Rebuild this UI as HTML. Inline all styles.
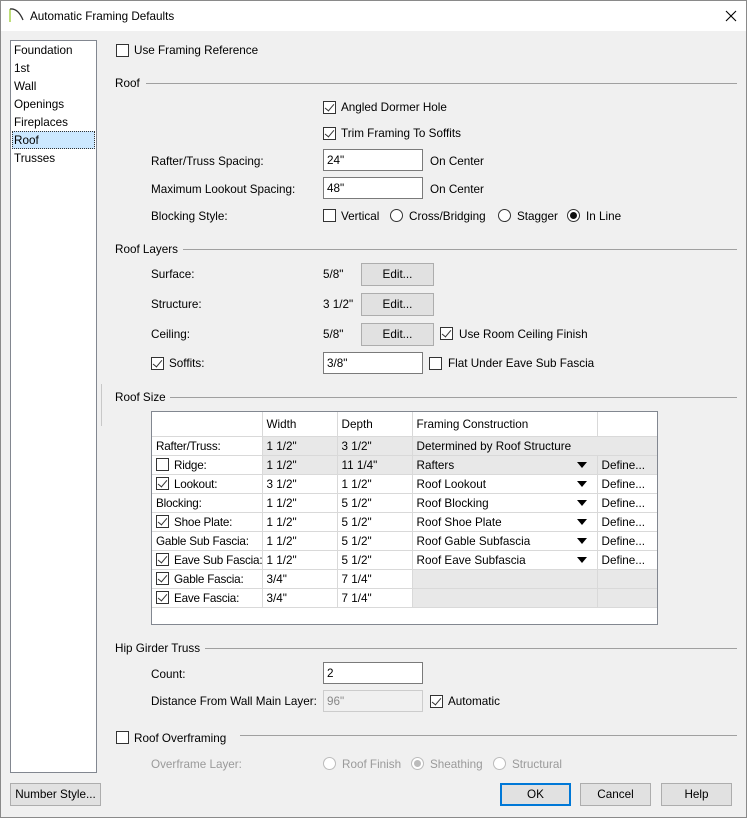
<!DOCTYPE html>
<html><head><style>
*{margin:0;padding:0;box-sizing:border-box}
body{width:747px;height:818px;overflow:hidden;background:#f0f0f0;font-family:"Liberation Sans",sans-serif;font-size:11.7px;color:#000;position:relative}
.a{position:absolute;white-space:nowrap;line-height:14px;margin-top:1px}
.cb{position:absolute;width:13px;height:13px;border:1px solid #333;background:#fff}
.cb.k::after{content:"";position:absolute;left:3px;top:0px;width:4px;height:8px;border:solid #333;border-width:0 1px 1px 0;transform:rotate(40deg)}
.rd{position:absolute;width:13px;height:13px;border:1px solid #333;border-radius:50%;background:#fff}
.rd.on::after{content:"";position:absolute;left:2px;top:2px;width:7px;height:7px;border-radius:50%;background:#111}
.rd.dis{border-color:#bcbcbc}
.rd.dis.on::after{background:#bcbcbc}
.in{position:absolute;width:100px;height:22px;border:1px solid #7a7a7a;background:#fff;padding:4px 0 0 3px;line-height:14px}
.btn{position:absolute;height:23px;border:1px solid #adadad;background:#e1e1e1;text-align:center;line-height:22px}
.ln{position:absolute;height:1px;background:#a0a0a0}
table{border-collapse:collapse;position:absolute;left:152px;top:412px;table-layout:fixed;width:505px}
td{height:19px;padding:1px 0 0 4px;border-right:1px solid #d9d9d9;border-bottom:1px solid #d9d9d9;line-height:17px;white-space:nowrap;overflow:hidden;position:relative}
td:first-child{overflow:visible;letter-spacing:-0.2px}
.g{background:#e8e8e8}
.arr{position:absolute;right:10px;top:6px;width:0;height:0;border-left:5px solid transparent;border-right:5px solid transparent;border-top:6px solid #000}
.tcb{display:inline-block;width:13px;height:13px;border:1px solid #333;background:#fff;vertical-align:-2px;margin-right:5px;position:relative}
.tcb.k::after{content:"";position:absolute;left:3px;top:0px;width:4px;height:8px;border:solid #333;border-width:0 1px 1px 0;transform:rotate(40deg)}
.dis{color:#9a9a9a}
</style></head><body>
<div style="position:absolute;left:0;top:0;width:747px;height:31px;background:#fff"></div>
<div style="position:absolute;left:0;top:0;width:747px;height:818px;border:1px solid #8a8a8a"></div>
<svg style="position:absolute;left:8px;top:6px" width="20" height="18"><path d="M2 16 V3" stroke="#9acd32" stroke-width="1.3" fill="none"/><path d="M2 3 Q10 2 15 14" stroke="#333" stroke-width="1.3" fill="none"/></svg>
<div class="a" style="left:30px;top:9px">Automatic Framing Defaults</div>
<svg style="position:absolute;left:725px;top:10px" width="12" height="12"><path d="M1 1L11 11M11 1L1 11" stroke="#000" stroke-width="1.1"/></svg>

<div style="position:absolute;left:10px;top:40px;width:87px;height:733px;background:#fff;border:1px solid #828790"></div>
<div style="position:absolute;left:12px;top:131px;width:83px;height:18px;background:#cce8ff;border:1px dotted #333"></div>
<div class="a" style="left:14px;top:43px">Foundation</div>
<div class="a" style="left:14px;top:61px">1st</div>
<div class="a" style="left:14px;top:79px">Wall</div>
<div class="a" style="left:14px;top:97px">Openings</div>
<div class="a" style="left:14px;top:115px">Fireplaces</div>
<div class="a" style="left:14px;top:133px">Roof</div>
<div class="a" style="left:14px;top:151px">Trusses</div>

<div class="cb" style="left:116px;top:44px"></div><div class="a" style="left:134px;top:43px">Use Framing Reference</div>
<div class="a" style="left:115px;top:76px">Roof</div><div class="ln" style="left:146px;top:83px;width:591px"></div>
<div class="cb k" style="left:323px;top:101px"></div><div class="a" style="left:341px;top:100px">Angled Dormer Hole</div>
<div class="cb k" style="left:323px;top:127px"></div><div class="a" style="left:341px;top:126px">Trim Framing To Soffits</div>
<div class="a" style="left:151px;top:154px">Rafter/Truss Spacing:</div><div class="in" style="left:323px;top:149px">24"</div><div class="a" style="left:430px;top:154px">On Center</div>
<div class="a" style="left:151px;top:182px">Maximum Lookout Spacing:</div><div class="in" style="left:323px;top:177px">48"</div><div class="a" style="left:430px;top:182px">On Center</div>
<div class="a" style="left:151px;top:209px">Blocking Style:</div>
<div class="cb" style="left:323px;top:209px"></div><div class="a" style="left:341px;top:209px">Vertical</div>
<div class="rd" style="left:390px;top:209px"></div><div class="a" style="left:409px;top:209px">Cross/Bridging</div>
<div class="rd" style="left:498px;top:209px"></div><div class="a" style="left:517px;top:209px">Stagger</div>
<div class="rd on" style="left:567px;top:209px"></div><div class="a" style="left:586px;top:209px">In Line</div>

<div class="a" style="left:115px;top:242px">Roof Layers</div><div class="ln" style="left:183px;top:249px;width:554px"></div>
<div class="a" style="left:151px;top:267px">Surface:</div><div class="a" style="left:323px;top:267px">5/8"</div><div class="btn" style="left:361px;top:263px;width:73px">Edit...</div>
<div class="a" style="left:151px;top:297px">Structure:</div><div class="a" style="left:323px;top:297px">3 1/2"</div><div class="btn" style="left:361px;top:293px;width:73px">Edit...</div>
<div class="a" style="left:151px;top:327px">Ceiling:</div><div class="a" style="left:323px;top:327px">5/8"</div><div class="btn" style="left:361px;top:323px;width:73px">Edit...</div>
<div class="cb k" style="left:440px;top:327px"></div><div class="a" style="left:459px;top:327px">Use Room Ceiling Finish</div>
<div class="cb k" style="left:151px;top:357px"></div><div class="a" style="left:169px;top:356px">Soffits:</div>
<div class="in" style="left:323px;top:352px">3/8"</div>
<div class="cb" style="left:429px;top:357px"></div><div class="a" style="left:448px;top:356px">Flat Under Eave Sub Fascia</div>
<div style="position:absolute;left:101px;top:384px;width:1px;height:42px;background:#c8c8c8"></div>

<div class="a" style="left:115px;top:390px">Roof Size</div><div class="ln" style="left:170px;top:397px;width:567px"></div>
<div style="position:absolute;left:151px;top:411px;width:507px;height:214px;background:#fff;border:1px solid #828790"></div>
<table>
<colgroup><col style="width:110px"><col style="width:75px"><col style="width:75px"><col style="width:185px"><col style="width:60px"></colgroup>
<tr><td style="height:24px"></td><td>Width</td><td>Depth</td><td>Framing Construction</td><td style="border-right:none"></td></tr>
<tr><td>Rafter/Truss:</td><td class="g">1 1/2"</td><td class="g">3 1/2"</td><td class="g" colspan="2" style="border-right:none">Determined by Roof Structure</td></tr>
<tr><td><span class="tcb"></span>Ridge:</td><td class="g">1 1/2"</td><td class="g">11 1/4"</td><td class="g">Rafters<span class="arr"></span></td><td class="g" style="border-right:none">Define...</td></tr>
<tr><td><span class="tcb k"></span>Lookout:</td><td>3 1/2"</td><td>1 1/2"</td><td>Roof Lookout<span class="arr"></span></td><td style="border-right:none">Define...</td></tr>
<tr><td>Blocking:</td><td>1 1/2"</td><td>5 1/2"</td><td>Roof Blocking<span class="arr"></span></td><td style="border-right:none">Define...</td></tr>
<tr><td><span class="tcb k"></span>Shoe Plate:</td><td>1 1/2"</td><td>5 1/2"</td><td>Roof Shoe Plate<span class="arr"></span></td><td style="border-right:none">Define...</td></tr>
<tr><td>Gable Sub Fascia:</td><td>1 1/2"</td><td>5 1/2"</td><td>Roof Gable Subfascia<span class="arr"></span></td><td style="border-right:none">Define...</td></tr>
<tr><td><span class="tcb k"></span>Eave Sub Fascia:</td><td>1 1/2"</td><td>5 1/2"</td><td>Roof Eave Subfascia<span class="arr"></span></td><td style="border-right:none">Define...</td></tr>
<tr><td><span class="tcb k"></span>Gable Fascia:</td><td>3/4"</td><td>7 1/4"</td><td class="g"></td><td class="g" style="border-right:none"></td></tr>
<tr><td><span class="tcb k"></span>Eave Fascia:</td><td>3/4"</td><td>7 1/4"</td><td class="g"></td><td class="g" style="border-right:none"></td></tr>
</table>

<div class="a" style="left:115px;top:641px">Hip Girder Truss</div><div class="ln" style="left:205px;top:648px;width:532px"></div>
<div class="a" style="left:151px;top:667px">Count:</div><div class="in" style="left:323px;top:662px">2</div>
<div class="a" style="left:151px;top:694px">Distance From Wall Main Layer:</div><div class="in" style="left:323px;top:690px;background:#f0f0f0;border-color:#ccc;color:#888">96"</div>
<div class="cb k" style="left:430px;top:695px"></div><div class="a" style="left:448px;top:694px">Automatic</div>
<div class="cb" style="left:116px;top:731px"></div><div class="a" style="left:134px;top:731px">Roof Overframing</div><div class="ln" style="left:240px;top:735px;width:497px"></div>
<div class="a dis" style="left:151px;top:757px">Overframe Layer:</div>
<div class="rd dis" style="left:323px;top:757px"></div><div class="a dis" style="left:342px;top:757px">Roof Finish</div>
<div class="rd dis on" style="left:411px;top:757px"></div><div class="a dis" style="left:430px;top:757px">Sheathing</div>
<div class="rd dis" style="left:493px;top:757px"></div><div class="a dis" style="left:512px;top:757px">Structural</div>

<div class="btn" style="left:10px;top:783px;width:91px">Number Style...</div>
<div class="btn" style="left:500px;top:783px;width:71px;border:2px solid #0078d7;line-height:20px">OK</div>
<div class="btn" style="left:580px;top:783px;width:71px">Cancel</div>
<div class="btn" style="left:661px;top:783px;width:71px">Help</div>
</body></html>
